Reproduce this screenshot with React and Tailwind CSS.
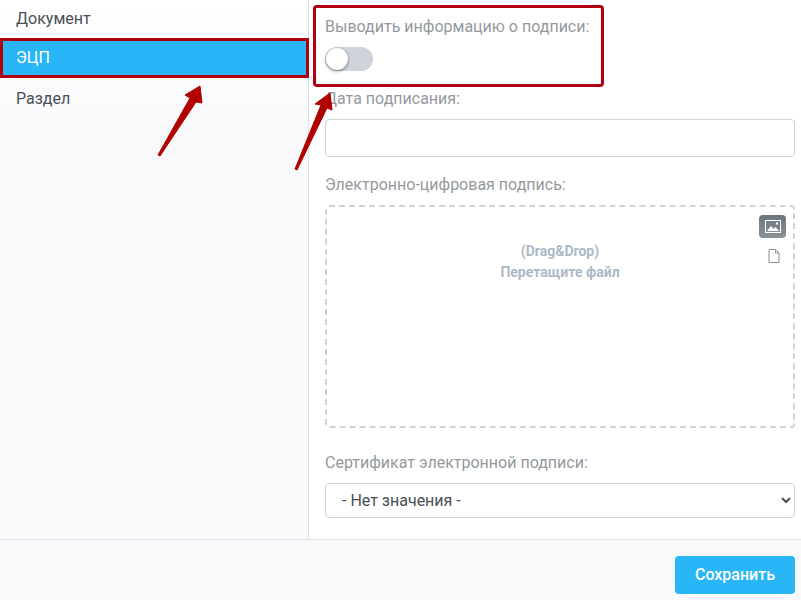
export default function App() {
  return (
    <div className="relative w-[801px] h-[600px] overflow-hidden bg-white font-['Roboto',sans-serif] text-base">
      <div className="flex h-[540px] border-b border-[#dee2e6]">
        <aside className="w-[309px] shrink-0 border-r border-[#dee2e6] bg-gradient-to-b from-white to-[#f8f9fb] to-[25%]">
          <div className="h-[38px] pl-4 flex items-center text-[#495057]">Документ</div>
          <div className="h-[40px] flex items-center bg-[#29b6f6] text-white border-[3px] border-[#b00010] pl-[13px] mr-[-1px]">ЭЦП</div>
          <div className="h-[42px] pl-4 flex items-center text-[#495057]">Раздел</div>
        </aside>
        <main className="flex-1 pl-4 pr-[6px] pt-[17px]">
          <div className="text-[#95999e] leading-5">Выводить информацию о подписи:</div>
          <div className="mt-[10px] w-12 h-6 rounded-full bg-[#ced4da] relative">
            <div className="absolute left-px top-px w-[22px] h-[22px] rounded-full bg-white shadow-[0_1px_3px_rgba(0,0,0,0.5)]"></div>
          </div>
          <div className="mt-[18px] text-[#95999e] leading-5">Дата подписания:</div>
          <input className="mt-[10px] block w-full h-[38px] rounded border border-[#ced4da] bg-white" />
          <div className="mt-[18px] text-[#95999e] leading-5">Электронно-цифровая подпись:</div>
          <div className="relative mt-[10px] h-[223px] rounded border-2 border-dashed border-[#ced4da] text-center pt-[34px]">
            <div className="text-sm font-bold leading-[21px] text-[#adb9c7]">(Drag&amp;Drop)</div>
            <div className="text-sm font-bold leading-[21px] text-[#adb9c7]">Перетащите файл</div>
            <div className="absolute top-[8px] right-[7px] w-[27px] h-[23px] rounded-sm bg-gradient-to-b from-[#6c757d] to-[#8a9298] flex items-center justify-center">
              <svg width="16" height="13" viewBox="0 0 16 13" fill="none">
                <rect x="0.5" y="0.5" width="15" height="12" stroke="#fff" />
                <path d="M2 11l4-5 2.5 3 2-2 3.5 4z" fill="#fff" />
                <circle cx="12" cy="3.5" r="1.2" fill="#fff" />
              </svg>
            </div>
            <div className="absolute top-[42px] right-[13px]">
              <svg width="12" height="14" viewBox="0 0 12 14" fill="none">
                <path d="M1 .5h6.5L11 4v9.5H1z M7.5 .5V4H11" stroke="#8a8f94" strokeWidth="1" />
              </svg>
            </div>
          </div>
          <div className="mt-[25px] text-[#95999e] leading-5">Сертификат электронной подписи:</div>
          <select className="mt-[10px] block w-full h-[35px] rounded border border-[#ced4da] bg-white pl-3 text-base text-[#495057]">
            <option>- Нет значения -</option>
          </select>
        </main>
      </div>
      <footer className="h-[60px] bg-[#f8f9fb] flex items-start justify-end pr-[6px] pt-[16px]">
        <button type="button" className="w-[120px] h-[38px] rounded bg-[#29b6f6] text-white font-medium">Сохранить</button>
      </footer>

      <div className="absolute left-[313px] top-[5px] w-[291px] h-[82px] border-[3px] border-[#b00010] rounded-sm"></div>
      <svg className="absolute left-0 top-0 pointer-events-none" width="801" height="600" viewBox="0 0 801 600">
        <polygon points="158,155 160,156 196,102 202,103 200,86 185,95 190,98" fill="#b00000" stroke="#b00000" strokeLinejoin="round" />
        <polygon points="295,169 297,170 327,108 332,110 330,93 315,104 321,105" fill="#b00000" stroke="#b00000" strokeLinejoin="round" />
      </svg>
    </div>
  )
}
